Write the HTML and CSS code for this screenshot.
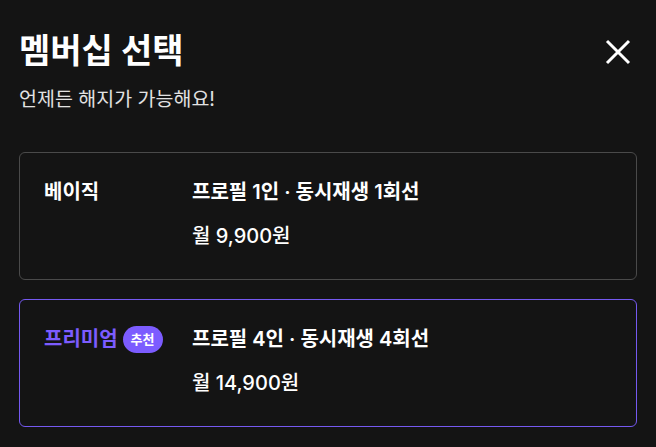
FILE: index.html
```html
<!DOCTYPE html>
<html lang="ko">
<head>
    <meta charset="UTF-8">
    <meta name="viewport" content="width=device-width, initial-scale=1.0">
    <title>멤버십 선택</title>
    <link rel="stylesheet" href="styles.css">
</head>
<body>
    <div class="sheet">
        <header class="sheet-header">
            <div>
                <h1>멤버십 선택</h1>
                <p class="subtitle">언제든 해지가 가능해요!</p>
            </div>
            <button class="close-btn" aria-label="닫기">
                <svg width="28" height="28" viewBox="0 0 28 28">
                    <path d="M3 3 L25 25 M25 3 L3 25" stroke="#fff" stroke-width="3" stroke-linecap="butt" fill="none"/>
                </svg>
            </button>
        </header>

        <div class="plan">
            <div class="plan-name">베이직</div>
            <div class="plan-info">
                <div class="plan-desc">프로필 1인 · 동시재생 1회선</div>
                <div class="plan-price">월 9,900원</div>
            </div>
        </div>

        <div class="plan selected">
            <div class="plan-name">프리미엄 <span class="badge">추천</span></div>
            <div class="plan-info">
                <div class="plan-desc">프로필 4인 · 동시재생 4회선</div>
                <div class="plan-price">월 14,900원</div>
            </div>
        </div>
    </div>
</body>
</html>
```

FILE: styles.css
```css
body {
    font-family: Inter, "Noto Sans CJK KR", sans-serif;
    background-color: #141414;
    color: #fff;
    margin: 0;
    padding: 0;
}
.sheet {
    padding: 27px 19px 0 19px;
}
.sheet-header {
    display: flex;
    justify-content: space-between;
    align-items: flex-start;
    margin-bottom: 39px;
}
.sheet-header h1 {
    margin: 0;
    font-size: 34px;
    font-weight: 700;
    line-height: 48px;
}
.subtitle {
    margin: 10px 0 0 0;
    font-size: 19.5px;
    line-height: 28px;
    color: #e2e2e2;
}
.close-btn {
    background: none;
    border: none;
    padding: 0;
    margin: 11px 5px 0 0;
    cursor: pointer;
}
.plan {
    display: flex;
    border: 1px solid #4a4a4a;
    border-radius: 6px;
    padding: 24px 24px 28px 24px;
    margin-bottom: 19px;
}
.plan:last-child {
    margin-bottom: 0;
}
.plan.selected {
    border-color: #7559f0;
}
.plan-name {
    width: 148px;
    font-size: 20px;
    font-weight: 700;
    line-height: 30px;
    display: flex;
    align-items: center;
    gap: 5px;
    align-self: flex-start;
}
.selected .plan-name {
    color: #7c5cff;
}
.badge {
    display: inline-block;
    background-color: #7c5cff;
    color: #fff;
    font-size: 13px;
    font-weight: 700;
    line-height: 27px;
    padding: 0 8px;
    border-radius: 14px;
}
.plan-info {
    display: flex;
    flex-direction: column;
    gap: 14px;
}
.plan-desc {
    font-size: 20px;
    font-weight: 600;
    line-height: 30px;
}
.plan-price {
    font-size: 20px;
    font-weight: 500;
    line-height: 30px;
}
```
